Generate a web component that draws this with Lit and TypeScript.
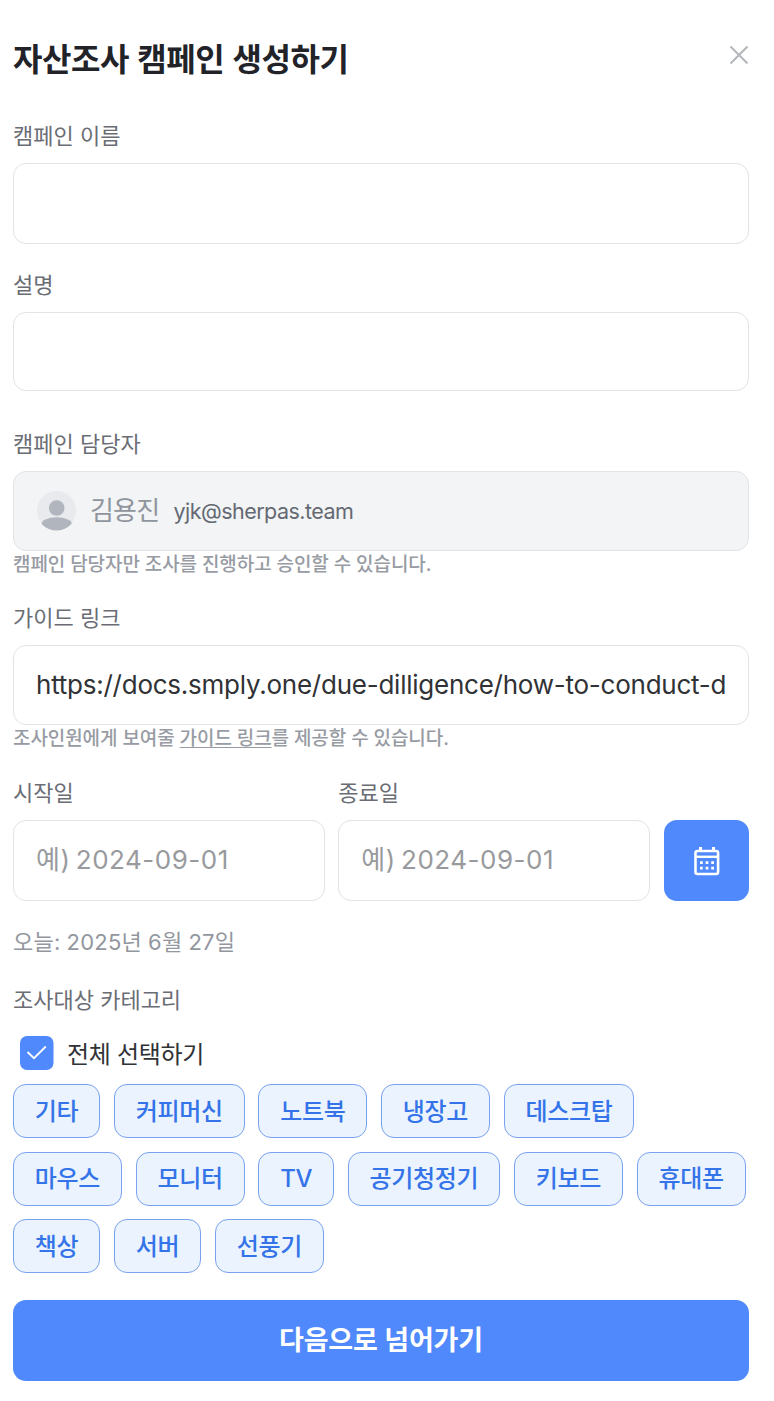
import { LitElement, html, css } from "lit";
import { customElement } from "lit/decorators.js";
import { classMap } from "lit/directives/class-map.js";

const CATEGORY_ROWS = [
  ["기타", "커피머신", "노트북", "냉장고", "데스크탑"],
  ["마우스", "모니터", "TV", "공기청정기", "키보드", "휴대폰"],
  ["책상", "서버", "선풍기"],
];

@customElement("app-root")
export class AppRoot extends LitElement {
  static styles = css`
    :host {
      display: block;
      box-sizing: border-box;
      height: 1401px;
      padding: 39px 25px 20px 13px;
      background: #fff;
      color: #26282c;
      font-family: Inter, "Noto Sans CJK KR", sans-serif;
      overflow: hidden;
    }
    * { box-sizing: border-box; }
    .header {
      display: flex;
      justify-content: space-between;
      height: 84px;
    }
    .title {
      margin: 0;
      font-size: 32px;
      line-height: 41px;
      font-weight: 700;
      letter-spacing: -0.45px;
      word-spacing: 1.2px;
      color: #212329;
      white-space: nowrap;
    }
    .close { width: 20px; height: 20px; margin-top: 6px; }
    .label {
      display: block;
      height: 27px;
      margin-bottom: 13px;
      font-size: 22px;
      line-height: 27px;
      letter-spacing: 0;
      color: #6a6d74;
      white-space: nowrap;
    }
    .field { margin-bottom: 28px; }
    .field.description { margin-bottom: 40px; }
    .field.link { margin-bottom: 28px; }
    .box {
      display: flex;
      align-items: center;
      height: 81px;
      padding: 0 22px;
      border: 1.5px solid #e2e3e5;
      border-radius: 13px;
      background: #fff;
      white-space: nowrap;
      overflow: hidden;
    }
    .description .box { height: 79px; }
    .owner .box, .link .box { height: 80px; }
    .box.disabled { background: #f2f4f6; border-color: #e1e3e5; }
    .avatar { width: 40px; height: 40px; flex: none; margin-right: 14px; margin-top: -1px; }
    .name { font-size: 26px; letter-spacing: -0.8px; color: #90949d; margin-right: 14px; padding-bottom: 6px; }
    .email { font-size: 21.5px; letter-spacing: -0.52px; color: #656972; }
    .url { font-size: 26px; letter-spacing: -0.24px; color: #303236; padding-bottom: 1px; }
    .helper {
      height: 26px;
      font-size: 19px;
      line-height: 27px;
      font-weight: 500;
      letter-spacing: -0.08px;
      color: #979ba3;
      white-space: nowrap;
    }
    .guide { text-decoration: underline; text-underline-offset: 2px; text-decoration-thickness: 1px; }
    .dates {
      display: grid;
      grid-template-columns: 311.5px 311.5px 85.5px;
      column-gap: 13.75px;
      align-items: end;
      height: 122px;
    }
    .placeholder { font-size: 26px; letter-spacing: 0.5px; word-spacing: -2.4px; color: #989a9d; padding-bottom: 6px; }
    .calendar {
      display: grid;
      place-items: center;
      height: 81px;
      padding-left: 1px;
      border-radius: 13px;
      background: #4f89fc;
    }
    .today {
      height: 27px;
      margin: 28px 0 31px;
      font-size: 22px;
      line-height: 27px;
      letter-spacing: 0.23px;
      word-spacing: -0.4px;
      color: #92969e;
    }
    .categories-label { margin-bottom: 22px; }
    .select-all {
      display: flex;
      align-items: center;
      height: 34px;
      margin: 0 0 14px 7px;
      font-size: 24px;
      letter-spacing: -0.3px;
      color: #303236;
    }
    .select-all span { padding-bottom: 2px; }
    .check { width: 34px; height: 34px; margin-right: 13px; flex: none; }
    .chips { display: flex; flex-direction: column; gap: 13.5px; margin-bottom: 27px; }
    .row { display: flex; gap: 13.8px; height: 54px; }
    .chip {
      display: flex;
      align-items: center;
      padding: 0 20.8px 4px;
      border: 1.5px solid #79a2ee;
      border-radius: 13px;
      background: #eaf3fe;
      color: #3474e8;
      font-size: 24px;
      font-weight: 500;
      letter-spacing: -0.32px;
      white-space: nowrap;
    }
    .chip.latin { padding-bottom: 0; }
    .submit {
      display: block;
      width: 100%;
      height: 81px;
      padding: 0 0 4px;
      border: 0;
      border-radius: 13px;
      background: #4f89fc;
      color: #fff;
      font: inherit;
      font-size: 27px;
      font-weight: 700;
      letter-spacing: -0.1px;
    }
  `;

  private chip(name: string) {
    const latin = /^[A-Za-z]+$/.test(name);
    return html`<span class=${classMap({ chip: true, latin })}>${name}</span>`;
  }

  render() {
    return html`
      <header class="header">
        <h1 class="title">자산조사 캠페인 생성하기</h1>
        <svg class="close" viewBox="0 0 20 20" fill="none" stroke="#b3b6bc" stroke-width="2">
          <path d="M1.5 1.5 18.5 18.5M18.5 1.5 1.5 18.5" />
        </svg>
      </header>

      <div class="field">
        <span class="label">캠페인 이름</span>
        <div class="box"></div>
      </div>
      <div class="field description">
        <span class="label">설명</span>
        <div class="box"></div>
      </div>
      <div class="field owner">
        <span class="label">캠페인 담당자</span>
        <div class="box disabled">
          <svg class="avatar" viewBox="0 0 40 40">
            <defs><clipPath id="disc"><circle cx="20.5" cy="19.5" r="20" /></clipPath></defs>
            <circle cx="20.5" cy="19.5" r="19.5" fill="#e8eaed" />
            <g fill="#b1b5bd" clip-path="url(#disc)">
              <circle cx="20.7" cy="17" r="7.8" />
              <ellipse cx="20.7" cy="33.2" rx="15.2" ry="7" />
            </g>
          </svg>
          <span class="name">김용진</span>
          <span class="email">yjk@sherpas.team</span>
        </div>
        <div class="helper">캠페인 담당자만 조사를 진행하고 승인할 수 있습니다.</div>
      </div>
      <div class="field link">
        <span class="label">가이드 링크</span>
        <div class="box">
          <span class="url">https://docs.smply.one/due-dilligence/how-to-conduct-d</span>
        </div>
        <div class="helper">조사인원에게 보여줄 <span class="guide">가이드 링크</span>를 제공할 수 있습니다.</div>
      </div>

      <div class="dates">
        <div>
          <span class="label">시작일</span>
          <div class="box"><span class="placeholder">예) 2024-09-01</span></div>
        </div>
        <div>
          <span class="label">종료일</span>
          <div class="box"><span class="placeholder">예) 2024-09-01</span></div>
        </div>
        <div class="calendar">
          <svg width="26" height="30" viewBox="0 0 26 30" fill="none" stroke="#fff">
            <rect x="1.5" y="5" width="22.6" height="23" rx="2" stroke-width="2.6" />
            <path d="M2 10.8H24" stroke-width="2.4" />
            <path d="M6.5 1V5M19.5 1V5" stroke-width="3" />
            <path d="M6 16.7H20M6 22.2H20" stroke-width="2.8" stroke-dasharray="2.8" />
          </svg>
        </div>
      </div>
      <div class="today">오늘: 2025년 6월 27일</div>

      <span class="label categories-label">조사대상 카테고리</span>
      <div class="select-all">
        <svg class="check" viewBox="0 0 34 34" fill="none">
          <rect width="33.5" height="34" rx="7" fill="#4f89fc" />
          <path d="M7.5 16 14 22.2 25.8 10.5" stroke="#fff" stroke-width="1.8" />
        </svg>
        <span>전체 선택하기</span>
      </div>
      <div class="chips">
        ${CATEGORY_ROWS.map((row) => html`<div class="row">${row.map((name) => this.chip(name))}</div>`)}
      </div>
      <button class="submit">다음으로 넘어가기</button>
    `;
  }
}
